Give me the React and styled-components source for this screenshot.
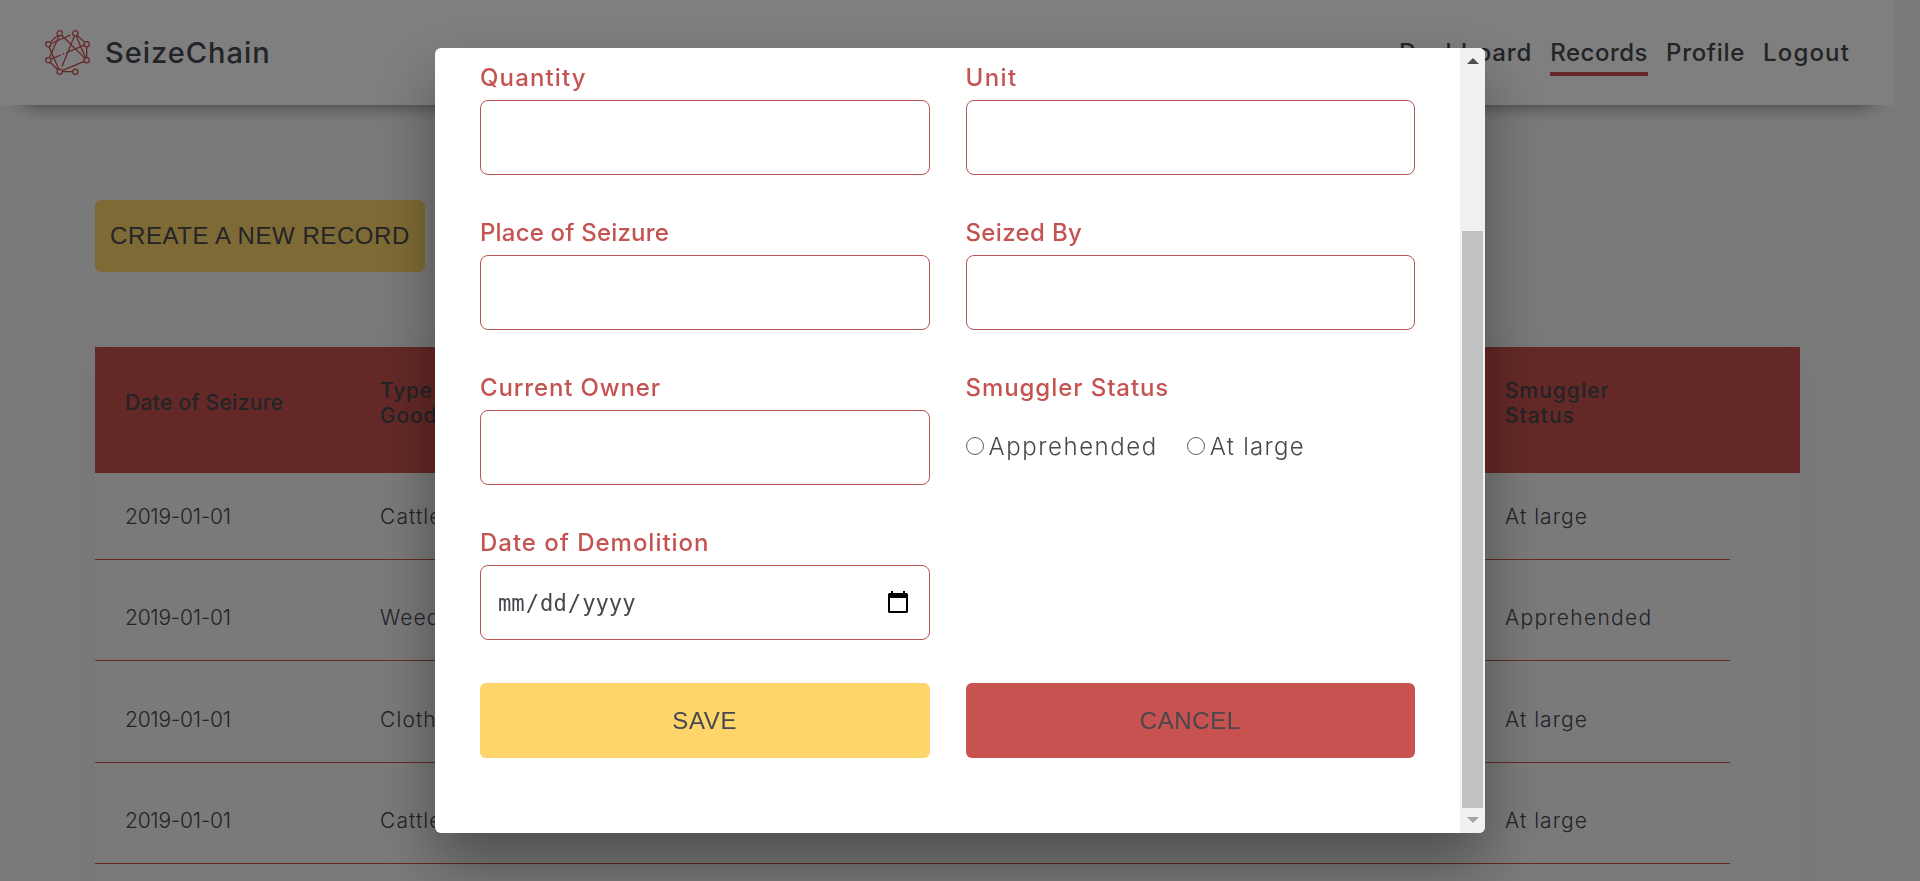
import React from "react";
import styled, { createGlobalStyle } from "styled-components";

const RED = "#c8524f";
const YELLOW = "#fdd56a";
const INK = "#46484e";

const GlobalStyle = createGlobalStyle`
  *, *::before, *::after { box-sizing: border-box; }
  html, body, #root { height: 100%; }
  body {
    margin: 0;
    overflow: hidden;
    background: #f4f4f4;
    color: ${INK};
    font-family: Inter, "Open Sans", sans-serif;
  }
`;

const Page = styled.div`
  width: 1895px;
  height: 881px;
  overflow: hidden;
`;

const Header = styled.header`
  display: flex;
  align-items: center;
  justify-content: space-between;
  height: 105px;
  padding: 0 45px;
  background: #fff;
  box-shadow: 0 22px 20px -24px rgba(0, 0, 0, 0.65);
`;

const Brand = styled.a`
  display: flex;
  align-items: center;
  gap: 15px;
  font-size: 29px;
  font-weight: 500;
  letter-spacing: 1px;
`;

const Nav = styled.nav`
  display: flex;
  gap: 18px;
`;

const NavLink = styled.a`
  border: solid transparent;
  border-width: 4px 0;
  border-bottom-color: ${(p) => (p.$active ? RED : "transparent")};
  font-size: 24px;
  font-weight: 500;
  line-height: 39px;
  letter-spacing: ${(p) => p.$track}px;
`;

const Main = styled.main`
  padding: 95px 95px 0;
`;

const Button = styled.button`
  height: ${(p) => p.$height || 75}px;
  padding: 0 15px;
  border: 0;
  border-radius: 6px;
  background: ${(p) => (p.$danger ? RED : YELLOW)};
  color: ${INK};
  font: 24px "Liberation Sans", Arial, sans-serif;
  letter-spacing: ${(p) => p.$track}px;
  text-transform: uppercase;
  white-space: nowrap;
`;

const CreateButton = styled(Button)`
  display: block;
  width: 330px;
  margin-bottom: 75px;
`;

const Table = styled.section`
  height: 700px;
  background: #f4f4f4;
  box-shadow: 0 10px 40px rgba(0, 0, 0, 0.05);
`;

const TableHead = styled.div`
  display: grid;
  grid-template-columns: 255px 1125px 1fr;
  align-items: center;
  height: 126px;
  padding: 0 0 15px 30px;
  background: ${RED};
`;

const HeadCell = styled.div`
  width: ${(p) => p.$width || 200}px;
  font-size: 21px;
  font-weight: 500;
  line-height: 25px;
  letter-spacing: ${(p) => p.$track}px;
`;

const TableRow = styled.div`
  display: grid;
  grid-template-columns: 255px 1125px 1fr;
  width: 1635px;
  padding: 45.33px 0 29px 30px;
  border-bottom: 1px solid ${RED};

  &:nth-child(2) { padding-top: 31px; }
`;

const Cell = styled.div`
  font-size: 21px;
  font-weight: 300;
  line-height: 26px;
  letter-spacing: ${(p) => p.$track}px;
`;

const Overlay = styled.div`
  position: fixed;
  inset: 0;
  display: flex;
  align-items: center;
  justify-content: center;
  background: rgba(0, 0, 0, 0.5);
`;

const Modal = styled.div`
  display: flex;
  width: 1050px;
  height: 785px;
  border-radius: 6px;
  background: #fff;
  overflow: hidden;
  box-shadow: 0 30px 60px rgba(0, 0, 0, 0.36);
`;

const Form = styled.form`
  flex: 1;
  padding: 18px 45px 0;
`;

const Fields = styled.div`
  display: grid;
  grid-template-columns: 1fr 1fr;
  gap: 46px 36px;
  margin-bottom: 43px;
`;

const Field = styled.div`
  display: flex;
  flex-direction: column;
  gap: 10px;
`;

const Label = styled.label`
  color: #c45452;
  font-size: 24px;
  font-weight: 500;
  line-height: 24px;
  letter-spacing: ${(p) => p.$track}px;
`;

const Input = styled.input`
  width: 100%;
  height: 75px;
  border: 1px solid #b95553;
  border-radius: 8px;
  background: #fff;
`;

const DateInput = styled.div`
  display: flex;
  align-items: center;
  justify-content: space-between;
  height: 75px;
  padding: 0 21px 2px 16px;
  border: 1px solid #b95553;
  border-radius: 8px;
  font: 22.2px/30px "DejaVu Sans Mono", monospace;

  div { padding-top: 2px; }
  span { padding: 0 1px; }
`;

const RadioGroup = styled.div`
  display: flex;
  align-items: center;
  gap: 29px;
  height: 73px;
`;

const RadioLabel = styled.label`
  display: flex;
  align-items: center;
  gap: 5px;
  font-size: 24px;
  font-weight: 300;
  line-height: 24px;
  letter-spacing: ${(p) => p.$track}px;
`;

const Radio = styled.input`
  appearance: none;
  width: 18px;
  height: 18px;
  margin: 0 0 1px;
  border: 1px solid #5f5f5f;
  border-radius: 50%;
`;

const Actions = styled.div`
  display: grid;
  grid-template-columns: 1fr 1fr;
  gap: 36px;
`;

const Scrollbar = styled.div`
  display: flex;
  flex-direction: column;
  align-items: center;
  width: 25px;
  padding: 10px 0;
  background: #f1f1f1;
`;

const Thumb = styled.div`
  width: 21px;
  height: 577px;
  margin: 167px 0 9px;
  background: #c1c1c1;
`;

const Arrow = styled.div`
  border: 6px solid transparent;
  border-top: ${(p) => (p.$down ? "6px solid #a3a3a3" : "0")};
  border-bottom: ${(p) => (p.$down ? "0" : "6px solid #505050")};
`;

const NODES = [
  [14.7, 3.3], [30.3, 3.3], [3.3, 14.3], [41.7, 14.3],
  [3.3, 30.3], [41.7, 30.3], [14.7, 41.7], [30.3, 41.7],
];

function Logo() {
  return (
    <svg width="45" height="45" viewBox="0 0 45 45" fill="none" stroke={RED} strokeWidth="1.3">
      <path d="M12.8 5.2 5.2 12.4M14 5.9 4.4 27.8M16.6 5.2 40 28.4M5.9 13.5 25.5 5.2M32.2 5.2 39.8 12.4M31.2 5.9 40.6 27.9M41.7 17v10.6M29.4 5.9 17 36.5M39.2 15.2 21 22.8M19.2 23.6l-1.6.7M15.8 25 5.9 29.2M4.1 16.9 13.7 39.1M5.2 32.2 12.8 39.8M17.2 40.7 39.2 31.3M17.4 41.7h10.2" />
      {NODES.map(([x, y]) => (
        <circle key={`${x}-${y}`} cx={x} cy={y} r="2.6" />
      ))}
    </svg>
  );
}

function CalendarIcon() {
  return (
    <svg width="20" height="22" viewBox="0 0 20 22" fill="#000">
      <path fillRule="evenodd" d="M3 0h2v2h10V0h2v2h1.5A1.5 1.5 0 0 1 20 3.5v17a1.5 1.5 0 0 1-1.5 1.5h-17A1.5 1.5 0 0 1 0 20.5v-17A1.5 1.5 0 0 1 1.5 2H3zM2 7v13h16V7z" />
    </svg>
  );
}

const ROWS = [
  ["2019-01-01", "Cattle", "At large"],
  ["2019-01-01", "Weed", "Apprehended"],
  ["2019-01-01", "Clothes", "At large"],
  ["2019-01-01", "Cattle", "At large"],
];

export default function App() {
  return (
    <>
      <GlobalStyle />
      <Page>
        <Header>
          <Brand><Logo />SeizeChain</Brand>
          <Nav>
            <NavLink $track={0.9}>Dashboard</NavLink>
            <NavLink $track={0.5} $active>Records</NavLink>
            <NavLink $track={0.7}>Profile</NavLink>
            <NavLink $track={1.15}>Logout</NavLink>
          </Nav>
        </Header>
        <Main>
          <CreateButton $height={72} $track={0.57}>Create a new record</CreateButton>
          <Table>
            <TableHead>
              <HeadCell $track={0.3}>Date of Seizure</HeadCell>
              <HeadCell $track={0.8} $width={115}>Type of Goods</HeadCell>
              <HeadCell $track={1} $width={150}>Smuggler Status</HeadCell>
            </TableHead>
            {ROWS.map(([date, goods, status], i) => (
              <TableRow key={i}>
                <Cell $track={-0.25}>{date}</Cell>
                <Cell $track={1.1}>{goods}</Cell>
                <Cell $track={status === "Apprehended" ? 1.3 : 1.05}>{status}</Cell>
              </TableRow>
            ))}
          </Table>
        </Main>
      </Page>
      <Overlay>
        <Modal>
          <Form>
            <Fields>
              <Field><Label $track={1.15}>Quantity</Label><Input /></Field>
              <Field><Label $track={1.4}>Unit</Label><Input /></Field>
              <Field><Label $track={0.2}>Place of Seizure</Label><Input /></Field>
              <Field><Label $track={0.35}>Seized By</Label><Input /></Field>
              <Field><Label $track={0.87}>Current Owner</Label><Input /></Field>
              <Field>
                <Label $track={0.93}>Smuggler Status</Label>
                <RadioGroup>
                  <RadioLabel $track={1.55}><Radio type="radio" name="status" />Apprehended</RadioLabel>
                  <RadioLabel $track={1.25}><Radio type="radio" name="status" />At large</RadioLabel>
                </RadioGroup>
              </Field>
              <Field>
                <Label $track={0.98}>Date of Demolition</Label>
                <DateInput>
                  <div><span>mm</span>/<span>dd</span>/<span>yyyy</span></div>
                  <CalendarIcon />
                </DateInput>
              </Field>
            </Fields>
            <Actions>
              <Button type="button" $track={0.7}>Save</Button>
              <Button type="button" $danger $track={0.6}>Cancel</Button>
            </Actions>
          </Form>
          <Scrollbar>
            <Arrow />
            <Thumb />
            <Arrow $down />
          </Scrollbar>
        </Modal>
      </Overlay>
    </>
  );
}
